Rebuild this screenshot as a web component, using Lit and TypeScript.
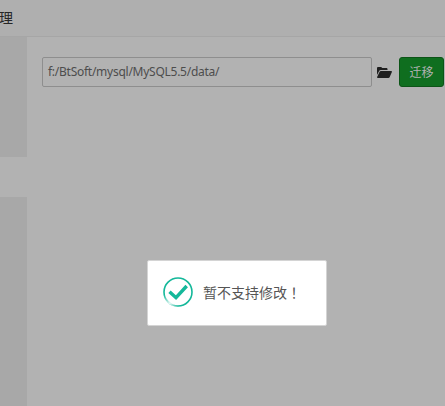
import { LitElement, html, css } from "lit";
import { customElement } from "lit/decorators.js";

@customElement("app-root")
export class AppRoot extends LitElement {
  static styles = css`
    :host { display: block; width: 445px; height: 406px; position: relative; overflow: hidden; background: #b2b2b2; font-family: "Noto Sans", "Open Sans", "Noto Sans CJK SC", sans-serif; }
    .head { height: 36px; border-bottom: 1px solid #a6a6a6; background: #afafaf; color: #262626; font-size: 14px; line-height: 35px; font-family: "Noto Sans CJK SC", sans-serif; box-sizing: content-box; }
    .head span { display: block; margin-left: -1px; }
    .body { display: flex; height: 369px; }
    .side { width: 27px; flex: none; display: flex; flex-direction: column; background: #a8a8a8; }
    .side .top { height: 120px; }
    .side .active { height: 40px; background: #b2b2b2; }
    .main { flex: 1; padding: 20px 1px 0 15px; display: flex; align-items: flex-start; }
    .path { width: 330px; height: 30px; box-sizing: border-box; border: 1px solid #8e8e8e; border-radius: 2px; padding: 0 5px; font-size: 12px; line-height: 28px; color: #4d4d4d; background: #b2b2b2; white-space: nowrap; letter-spacing: -0.26px; }
    .folder { width: 15px; height: 11px; margin: 10px 7px 0 5px; flex: none; display: block; }
    .btn { width: 45px; height: 30px; box-sizing: border-box; border: 1px solid #0c5417; border-radius: 3px; background: #0f6e1f; color: #b2b2b2; font-size: 12px; line-height: 28px; text-align: center; font-family: "Noto Sans CJK SC", sans-serif; }
    .toast { position: absolute; left: 147px; top: 260px; width: 180px; height: 66px; background: #fff; border: 1px solid #d4d4d4; display: flex; align-items: center; box-sizing: border-box; padding: 0 0 2px 15px; gap: 10px; border-radius: 2px; }
    .toast svg { width: 30px; height: 30px; flex: none; display: block; }
    .toast span { font-size: 14px; color: #555; font-family: "Noto Sans CJK SC", sans-serif; white-space: nowrap; }
    .toast .mark { font-family: "Noto Sans CJK TC", sans-serif; }
  `;

  render() {
    return html`
      <div class="head"><span>理</span></div>
      <div class="body">
        <div class="side"><div class="top"></div><div class="active"></div></div>
        <div class="main">
          <div class="path">f:/BtSoft/mysql/MySQL5.5/data/</div>
          <svg class="folder" viewBox="0 0 15 11"><path fill="#1f1f1f" d="M0 1.2C0 .5.5 0 1.2 0h2.6c.6 0 .9.6 1.5.9h4c.7 0 1.2.4 1.2 1.1v1H3.8c-.7 0-1.2.3-1.5.8L0 8V1.2zM3.9 4H14.2c.6 0 .9.5.7 1l-2.3 5.2c-.2.5-.7.8-1.2.8H.8c-.6 0-.9-.5-.7-1L2.6 4.8c.2-.5.7-.8 1.3-.8z"/></svg>
          <div class="btn">迁移</div>
        </div>
      </div>
      <div class="toast">
        <svg viewBox="0 0 30 30">
          <defs><linearGradient id="g" gradientUnits="userSpaceOnUse" x1="1" y1="18" x2="15" y2="29"><stop offset="0" stop-color="#fff" stop-opacity="0"/><stop offset="0.55" stop-color="#fff" stop-opacity="0.9"/><stop offset="1" stop-color="#fff" stop-opacity="0"/></linearGradient></defs>
          <circle cx="15" cy="15" r="14" fill="none" stroke="#14b89a" stroke-width="1.6"/>
          <path d="M1.4 18a14 14 0 0 0 13.6 11" fill="none" stroke="url(#g)" stroke-width="2.2"/>
          <path d="M6.5 14.7l6.5 6L23.7 9" fill="none" stroke="#14b89a" stroke-width="3.4"/>
        </svg>
        <span>暂不支持修改<span class="mark">！</span></span>
      </div>
    `;
  }
}
